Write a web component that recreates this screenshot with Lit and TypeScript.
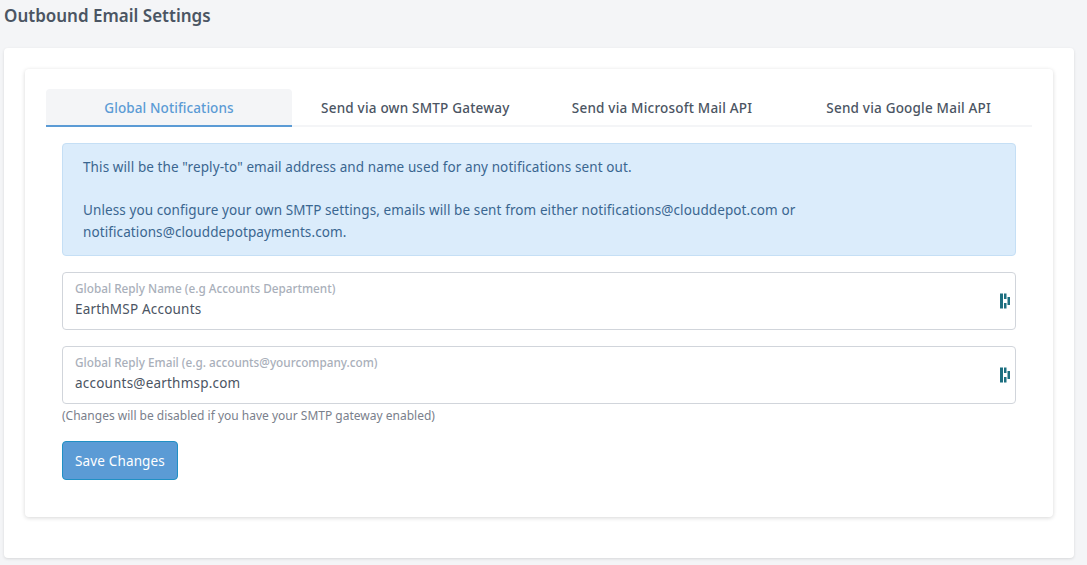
import { LitElement, html, css } from 'lit';
import { customElement } from 'lit/decorators.js';

const FONT = css`'Noto Sans', 'Open Sans', sans-serif`;

@customElement('app-root')
export class AppRoot extends LitElement {
  static styles = css`
    :host {
      display: block;
      height: 565px;
      overflow: hidden;
      background: #f4f5f7;
      color: #4b5563;
      font-family: ${FONT};
      font-size: 14px;
    }

    .title {
      margin: 0;
      padding: 5px 0 0 4px;
      height: 48px;
      box-sizing: border-box;
      font-size: 17px;
      line-height: 22px;
      font-weight: 600;
      color: #4b5563;
    }

    .outer {
      margin-left: 4px;
      width: 1070px;
      height: 510px;
      box-sizing: border-box;
      padding: 21px;
      background: #fff;
      border-radius: 4px;
      box-shadow: 0 1px 3px rgba(0, 0, 0, 0.12);
    }

    .inner {
      height: 448px;
      box-sizing: border-box;
      padding: 20px 21px;
      background: #fff;
      border-radius: 4px;
      box-shadow: 0 1px 4px rgba(0, 0, 0, 0.16);
    }

    .tabs {
      display: grid;
      grid-template-columns: 246px repeat(3, 1fr);
      height: 38px;
      box-sizing: border-box;
      border-bottom: 2px solid #f4f5f7;
    }

    .tab {
      height: 38px;
      box-sizing: border-box;
      padding-top: 9px;
      text-align: center;
      font-size: 13.5px;
      line-height: 20px;
      font-weight: 500;
      letter-spacing: 0.2px;
      color: #4b5563;
      border-radius: 4px 4px 0 0;
    }

    .tab.active {
      color: #5b9bd5;
      background: #f4f5f7;
      border-bottom: 2px solid #5b9bd5;
      letter-spacing: 0.1px;
    }

    .pane {
      padding: 16px 16px 0;
    }

    .alert {
      height: 113px;
      box-sizing: border-box;
      padding: 13px 20px;
      background: #dbecfb;
      border: 1px solid #c5dff5;
      border-radius: 4px;
      color: #3a6690;
      font-size: 13.5px;
      line-height: 21.5px;
      letter-spacing: 0.1px;
    }

    .alert p {
      margin: 0 0 21.5px;
    }

    .alert p:last-child {
      margin: 0;
    }

    .field {
      position: relative;
      height: 58px;
      box-sizing: border-box;
      margin-top: 16px;
      padding: 7px 12px;
      border: 1px solid #d1d5db;
      border-radius: 4px;
    }

    .field label {
      display: block;
      font-size: 11.75px;
      line-height: 16px;
      font-weight: 500;
      color: #a9afba;
    }

    .field .value {
      margin-top: 3px;
      font-size: 13.5px;
      line-height: 20px;
      letter-spacing: 0.2px;
      color: #4b5563;
    }

    .field svg {
      position: absolute;
      right: 4px;
      top: 20px;
    }

    .hint {
      margin-top: 3px;
      font-size: 12px;
      line-height: 18px;
      color: #7a808c;
    }

    .save {
      display: block;
      margin-top: 16px;
      width: 116px;
      height: 39px;
      padding: 0;
      box-sizing: border-box;
      background: #5b9bd5;
      border: 1px solid #2090c4;
      border-radius: 4px;
      color: #fff;
      font-family: inherit;
      font-size: 13.5px;
      font-weight: 400;
      letter-spacing: 0.15px;
    }
  `;

  private icon() {
    return html`<svg width="12" height="16" viewBox="0 0 12 16" fill="#1d6f80">
      <rect x="1" y="0.5" width="3" height="15"></rect>
      <rect x="5" y="0.5" width="2.5" height="5.5"></rect>
      <rect x="5" y="10" width="2.5" height="5.5"></rect>
      <rect x="8.5" y="4" width="2.5" height="8"></rect>
    </svg>`;
  }

  render() {
    const tabs = [
      'Global Notifications',
      'Send via own SMTP Gateway',
      'Send via Microsoft Mail API',
      'Send via Google Mail API',
    ];
    return html`
      <h1 class="title">Outbound Email Settings</h1>
      <div class="outer">
        <div class="inner">
          <div class="tabs">
            ${tabs.map((t, i) => html`<div class="tab ${i === 0 ? 'active' : ''}">${t}</div>`)}
          </div>
          <div class="pane">
            <div class="alert">
              <p>This will be the "reply-to" email address and name used for any notifications sent out.</p>
              <p>
                Unless you configure your own SMTP settings, emails will be sent from either
                notifications@clouddepot.com or<br />notifications@clouddepotpayments.com.
              </p>
            </div>
            <div class="field">
              <label>Global Reply Name (e.g Accounts Department)</label>
              <div class="value">EarthMSP Accounts</div>
              ${this.icon()}
            </div>
            <div class="field">
              <label>Global Reply Email (e.g. accounts@yourcompany.com)</label>
              <div class="value">accounts@earthmsp.com</div>
              ${this.icon()}
            </div>
            <div class="hint">(Changes will be disabled if you have your SMTP gateway enabled)</div>
            <button class="save">Save Changes</button>
          </div>
        </div>
      </div>
    `;
  }
}
